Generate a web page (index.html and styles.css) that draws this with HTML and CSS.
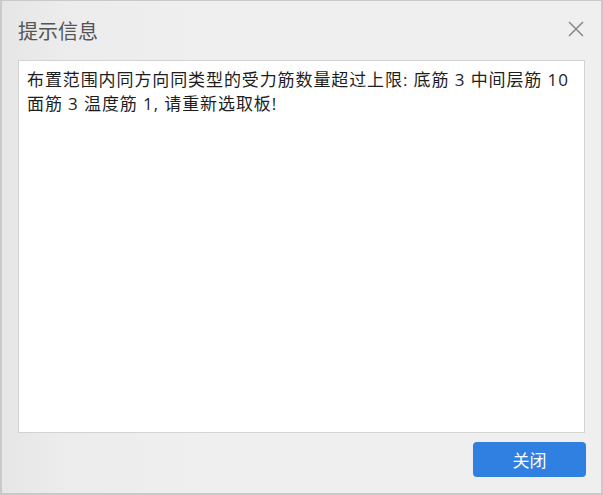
FILE: index.html
```html
<!DOCTYPE html>
<html lang="zh-CN">
<head>
<meta charset="utf-8">
<title>提示信息</title>
<link rel="stylesheet" href="styles.css">
</head>
<body>
<div class="window">
  <div class="header">
    <div class="title">提示信息</div>
    <div class="close" aria-label="关闭">
      <svg width="16" height="16" viewBox="0 0 16 16"><path d="M1 1 L15 15 M15 1 L1 15" stroke="#8a8a8a" stroke-width="1.6" fill="none"/></svg>
    </div>
  </div>
  <div class="content">布置范围内同方向同类型的受力筋数量超过上限: 底筋 3 中间层筋 10 面筋 3 温度筋 1, 请重新选取板!</div>
  <div class="footer">
    <button class="btn">关闭</button>
  </div>
</div>
</body>
</html>
```
FILE: styles.css
```css
html, body {
  margin: 0;
  padding: 0;
  background: #efefef;
}
.window {
  width: 603px;
  height: 495px;
  box-sizing: border-box;
  border: 1px solid #c9c9c9;
  border-width: 1px 2px 2px 2px;
  background: linear-gradient(90deg, #e6e6e6 0px, #ececec 60px, #efefef 200px, #efefef 100%);
  display: flex;
  flex-direction: column;
  padding: 0 16px 16px 16px;
  font-family: "Noto Sans CJK SC", "Noto Sans", sans-serif;
}
.header {
  height: 59px;
  display: flex;
  align-items: center;
  justify-content: space-between;
}
.title {
  font-size: 20px;
  color: #555555;
  margin-top: -1px;
}
.close {
  width: 16px;
  height: 16px;
  margin-right: 1px;
  margin-top: -4px;
}
.close svg { display: block; }
.content {
  height: 373px;
  box-sizing: border-box;
  background: #ffffff;
  border: 1px solid #d3d3d3;
  padding: 7px 8px;
  font-family: "Open Sans", "Noto Sans CJK SC", sans-serif;
  font-size: 17px;
  line-height: 24px;
  color: #1e1e1e;
  letter-spacing: 0.9px;
}
.footer {
  display: flex;
  justify-content: flex-end;
  padding-top: 9px;
}
.btn {
  width: 113px;
  height: 35px;
  border: none;
  border-radius: 4px;
  background: #2f80e0;
  color: #ffffff;
  font-family: "Noto Sans CJK SC", sans-serif;
  font-size: 17px;
  padding: 0;
  margin-right: -1px;
}
```
